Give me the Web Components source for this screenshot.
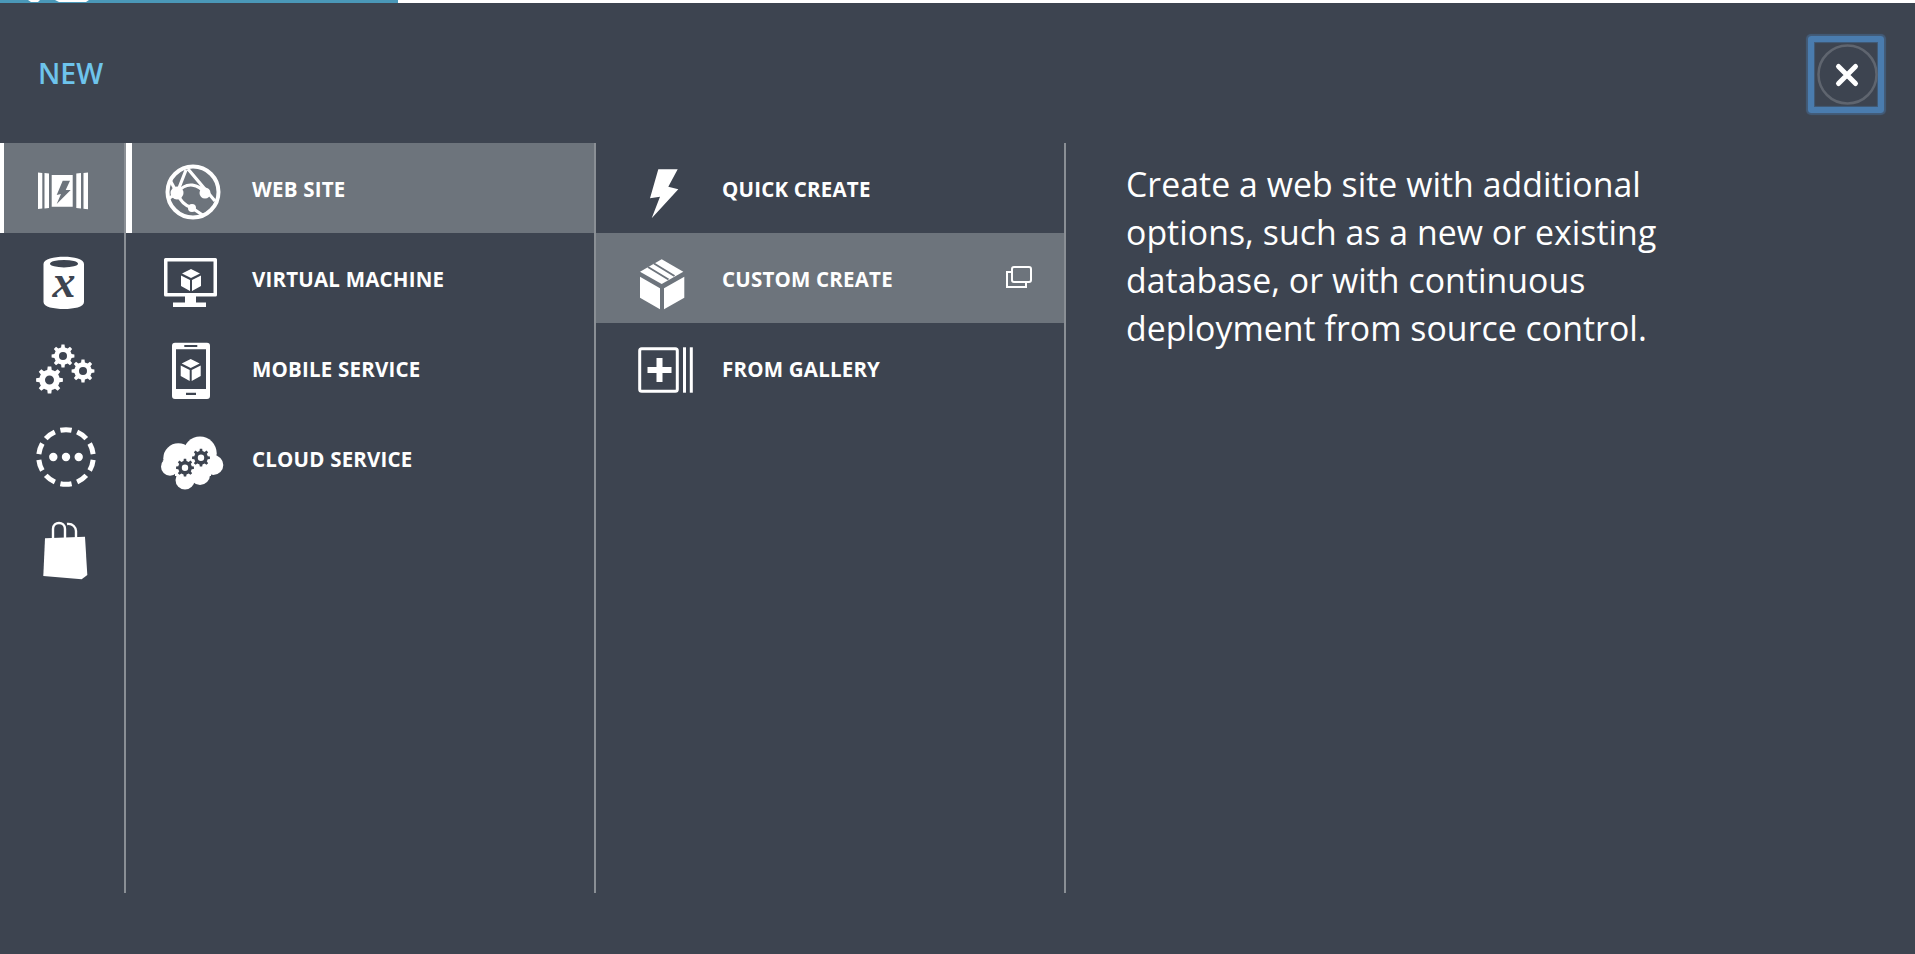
<!DOCTYPE html>
<html>
<head>
<meta charset="utf-8">
<title>New</title>
<style>
  html, body { margin: 0; height: 100%; background: #3d4450; overflow: hidden; }
</style>
</head>
<body>
<new-dialog>
  <span slot="title">NEW</span>
  <menu-rail slot="rail">
    <rail-item icon="websites" selected></rail-item>
    <rail-item icon="database"></rail-item>
    <rail-item icon="gears"></rail-item>
    <rail-item icon="dashed"></rail-item>
    <rail-item icon="bag"></rail-item>
  </menu-rail>
  <menu-column slot="col">
    <menu-item icon="globe" selected mark>WEB SITE</menu-item>
    <menu-item icon="vm">VIRTUAL MACHINE</menu-item>
    <menu-item icon="mobile">MOBILE SERVICE</menu-item>
    <menu-item icon="cloud">CLOUD SERVICE</menu-item>
  </menu-column>
  <menu-column slot="col">
    <menu-item icon="bolt">QUICK CREATE</menu-item>
    <menu-item icon="box" selected dialog>CUSTOM CREATE</menu-item>
    <menu-item icon="gallery">FROM GALLERY</menu-item>
  </menu-column>
  <p slot="desc">Create a web site with additional options, such as a new or existing database, or with continuous deployment from source control.</p>
</new-dialog>

<script>
function gear(cx, cy, r, hole, teeth = 8) {
  let d = "";
  const root = r * 0.76;
  const step = (Math.PI * 2) / teeth;
  for (let i = 0; i < teeth; i++) {
    const a = i * step;
    const pts = [
      [root, a - step * 0.5],
      [root, a - step * 0.28],
      [r, a - step * 0.17],
      [r, a + step * 0.17],
      [root, a + step * 0.28],
    ];
    for (const [rad, t] of pts) {
      d += (d ? "L" : "M") + (cx + rad * Math.cos(t)).toFixed(2) + " " + (cy + rad * Math.sin(t)).toFixed(2);
    }
  }
  d += `Z M${cx - hole} ${cy} a${hole} ${hole} 0 1 0 ${hole * 2} 0 a${hole} ${hole} 0 1 0 ${-hole * 2} 0Z`;
  return d;
}

function cube(cx, cy) {
  return `<path d="M${cx} ${cy - 11}l9 4.5l-9 4.5l-9-4.5Z
    M${cx - 10} ${cy - 4.5}l9 4.5v11l-9-5Z
    M${cx + 10} ${cy - 4.5}l-9 4.5v11l9-5Z"/>`;
}

const ICONS = {
  websites: `
    <path d="M8 16.500l4.300.4v35.600l-4.300.5Z M14.500 17l4.500.4v34.600l-4.500.5Z M46.300 17.400l4.700-.4v35.500l-4.700-.5Z M53.500 16.900l4.500-.4v36.800l-4.500-.5Z"/>
    <path fill-rule="evenodd" d="M21.700 19h21v31.700h-21Z M32.700 24.700l-6 14.300l4.300-1l-4.300 10l14-14h-5l4.300-9.300Z"/>`,
  database: `
    <path fill-rule="evenodd" d="M13.500 18C13.500 13 24 10.700 34 10.700S54 13 54 18V56C54 61 44 63 34 63S13.500 61 13.500 56Z M20 17.700a14 3.700 0 1 0 28 0a14 3.700 0 1 0-28 0Z"/>
    <text x="34" y="51" text-anchor="middle" font-family="'Liberation Serif', serif" font-style="italic" font-weight="700" font-size="46" fill="#3d4450">x</text>`,
  gears: `
    <path fill-rule="evenodd" d="${gear(19.500, 44, 13.500, 4.500)}"/>
    <path fill-rule="evenodd" d="${gear(33, 20, 11.500, 4)}"/>
    <path fill-rule="evenodd" d="${gear(53, 35, 11.500, 4)}"/>`,
  dashed: `
    <circle cx="36" cy="31" r="27.300" fill="none" stroke="#fff" stroke-width="5" pathLength="10" stroke-dasharray=".66 .34" stroke-dashoffset=".33" transform="rotate(-90 36 31)"/>
    <circle cx="23.300" cy="31" r="4.200"/><circle cx="36" cy="31" r="4.200"/><circle cx="48.700" cy="31" r="4.200"/>`,
  bag: `
    <path d="M15 22.300L55 20.700L57.300 59L51.700 63.300L13.300 60Z"/>
    <path fill="none" stroke="#fff" stroke-width="2.400" d="M23 24V13C23 5 35 5 35 13V23 M37 8C43 7 46 12 46 15V22"/>`,
  globe: `
    <g fill="none" stroke="#fff">
      <circle cx="32" cy="36" r="25.500" stroke-width="4"/>
      <path stroke-width="3.200" d="M27 13L54 45 M44 37C38 29 26 24 16 37 M16 37C19 45 25 50 31 52L43 60 M16 37L9 24 M16 37L25 14 M16 37L7 43"/>
    </g>
    <circle cx="44" cy="37" r="5.500"/><circle cx="16" cy="37" r="6.500"/><circle cx="31" cy="52" r="4"/>`,
  vm: `
    <path fill-rule="evenodd" d="M4.500 12H54.500a1.500 1.500 0 0 1 1.500 1.500V49a1.500 1.500 0 0 1-1.500 1.500H35V56.500H45V61H12V56.500H24V50.500H4.500A1.500 1.500 0 0 1 3 49V13.500A1.500 1.500 0 0 1 4.500 12Z M6.500 15.500V47H52.500V15.500Z"/>
    ${cube(30, 34)}`,
  mobile: `
    <path fill-rule="evenodd" d="M14 6.700H46A3 3 0 0 1 49 9.700V60A3 3 0 0 1 46 63H14A3 3 0 0 1 11 60V9.700A3 3 0 0 1 14 6.700Z M23.300 9V11H36.300V9Z M15 13.300V53H45V13.300Z M25 56.700V59H35V56.700Z"/>
    ${cube(29.700, 34)}`,
  cloud: `
    <circle cx="17.300" cy="32.300" r="15"/><circle cx="39" cy="27.300" r="16.700"/>
    <circle cx="52.300" cy="39" r="10"/><circle cx="9" cy="40.700" r="9"/>
    <circle cx="24" cy="54" r="9.500"/><circle cx="39" cy="49" r="10"/>
    <rect x="14" y="30" width="36" height="20"/>
    <path fill="#3d4450" fill-rule="evenodd" d="${gear(40, 31.700, 9, 3.200)}"/>
    <path fill="#3d4450" fill-rule="evenodd" d="${gear(24, 41.700, 9, 3.200)}"/>`,
  bolt: `<path transform="translate(1 0)" d="M26.300 13.300H45.700L36.300 30.700L46.300 33.300L19.700 62.300L28 40.700L18 42.300Z"/>`,
  box: `
    <g transform="translate(1 0)">
      <path d="M29.700 13.300L51.300 25.700L29.700 38L8 25.700Z"/>
      <path fill="none" stroke="#6d747c" stroke-width="2" d="M22 17.500L42.500 30 M16 21L36.500 33.500"/>
      <path d="M8 30.700L28 42.300V63.300L8 51.700Z M32 42.300L52.300 30.700V51.700L32 63.300Z"/>
    </g>`,
  gallery: `
    <g transform="translate(1.500 0)">
      <rect x="7.200" y="12.800" width="37.600" height="42.400" rx="2" fill="none" stroke="#fff" stroke-width="3"/>
      <path d="M24 22H30V31H39V37H30V46H24V37H15V31H24Z"/>
      <rect x="50.500" y="11.300" width="3" height="45.400"/><rect x="57.300" y="11.300" width="3" height="45.400"/>
    </g>`,
};

class AppIcon extends HTMLElement {
  constructor() {
    super();
    this.attachShadow({ mode: "open" });
  }

  connectedCallback() {
    this.shadowRoot.innerHTML = /* html */`
      <style>
        :host { display: block; width: 64px; height: 64px; flex: none; }
        svg { display: block; width: 64px; height: 64px; fill: #fff; overflow: visible; }
      </style>
      <svg viewBox="0 0 64 64" aria-hidden="true">${ICONS[this.getAttribute("name")] || ""}</svg>`;
  }
}

class RailItem extends HTMLElement {
  constructor() {
    super();
    this.attachShadow({ mode: "open" });
  }

  connectedCallback() {
    this.shadowRoot.innerHTML = /* html */`
      <style>
        :host {
          display: flex;
          height: 90px;
          box-sizing: border-box;
          padding: 13px 0 0 30px;
        }
        :host([selected]) {
          background: #6d747c;
          box-shadow: inset 4px 0 #fff;
        }
      </style>
      <app-icon name="${this.getAttribute("icon")}"></app-icon>`;
  }
}

class MenuRail extends HTMLElement {
  constructor() {
    super();
    this.attachShadow({ mode: "open" }).innerHTML = /* html */`
      <style>
        :host {
          display: block;
          width: 124px;
          flex: none;
          border-right: 2px solid #8a8f95;
        }
      </style>
      <slot></slot>`;
  }
}

class MenuColumn extends HTMLElement {
  constructor() {
    super();
    this.attachShadow({ mode: "open" }).innerHTML = /* html */`
      <style>
        :host {
          display: block;
          width: 468px;
          flex: none;
          border-right: 2px solid #8a8f95;
        }
      </style>
      <slot></slot>`;
  }
}

class MenuItem extends HTMLElement {
  constructor() {
    super();
    this.attachShadow({ mode: "open" });
  }

  connectedCallback() {
    const extra = this.hasAttribute("dialog") ? /* html */`
      <svg class="extra" width="28" height="24" viewBox="0 0 28 24" aria-hidden="true">
        <path d="M7 6H2V21H21V16" fill="none" stroke="#fff" stroke-width="2"/>
        <rect x="7" y="1" width="19" height="15" rx="2" fill="#6d747c" stroke="#fff" stroke-width="2"/>
      </svg>` : "";
    this.shadowRoot.innerHTML = /* html */`
      <style>
        :host {
          display: flex;
          align-items: center;
          height: 90px;
          box-sizing: border-box;
          padding-left: 35px;
          gap: 27px;
        }
        :host([selected]) { background: #6d747c; }
        :host([mark]) { box-shadow: inset 6px 0 #fff; }
        app-icon { align-self: flex-start; margin-top: 13px; }
        .label {
          font-family: "Open Sans", sans-serif;
          font-size: 20.5px;
          font-weight: 700;
          letter-spacing: 0.2px;
          padding-top: 1px;
          color: #fff;
        }
        .extra { margin-left: auto; margin-right: 31px; }
      </style>
      <app-icon name="${this.getAttribute("icon")}"></app-icon>
      <span class="label"><slot></slot></span>
      ${extra}`;
  }
}

class NewDialog extends HTMLElement {
  constructor() {
    super();
    this.attachShadow({ mode: "open" }).innerHTML = /* html */`
      <style>
        :host {
          display: block;
          height: 100%;
          color: #fff;
          font-family: "Open Sans", sans-serif;
        }
        .strip { display: flex; height: 3px; background: #fff; }
        .strip div { width: 398px; background: #4a98b8; }
        .strip svg { display: block; }
        header {
          height: 140px;
          box-sizing: border-box;
          display: flex;
          justify-content: space-between;
          align-items: flex-start;
          padding: 33px 31px 0 38px;
        }
        .title {
          font-size: 28.5px;
          font-weight: 600;
          line-height: 40px;
          margin-top: 17px;
          color: #6ec4ec;
        }
        .close {
          width: 64px;
          height: 65px;
          border: 6px solid #4a7cae;
          border-radius: 3px;
          box-shadow: 0 0 1px 2px #4a7cae70, inset 0 0 1px 1px #4a7cae70;
          box-sizing: content-box;
          padding: 0;
          background: none;
        }
        .close svg { display: block; }
        .columns { display: flex; height: 750px; }
        .desc { padding: 17px 0 0 60px; width: 570px; }
        ::slotted(p) {
          margin: 0;
          font-size: 33.8px;
          line-height: 48px;
          letter-spacing: 0.05px;
        }
      </style>
      <div class="strip">
        <div>
          <svg width="100" height="3" viewBox="0 0 100 3" fill="#fff" aria-hidden="true">
            <path d="M28 0H40L38 2H31Z M55 0H89L86 2H59Z"/>
          </svg>
        </div>
      </div>
      <header>
        <div class="title"><slot name="title"></slot></div>
        <button class="close" aria-label="Close">
          <svg width="64" height="65" viewBox="0 0 64 65" aria-hidden="true">
            <circle cx="33.500" cy="32.500" r="29" fill="none" stroke="#5f656f" stroke-width="2.500"/>
            <path d="M24.500 24.500L41.500 41.500M41.500 24.500L24.500 41.500" stroke="#fff" stroke-width="5" stroke-linecap="round"/>
          </svg>
        </button>
      </header>
      <div class="columns">
        <slot name="rail"></slot>
        <slot name="col"></slot>
        <div class="desc"><slot name="desc"></slot></div>
      </div>`;
  }
}

customElements.define("app-icon", AppIcon);
customElements.define("rail-item", RailItem);
customElements.define("menu-rail", MenuRail);
customElements.define("menu-column", MenuColumn);
customElements.define("menu-item", MenuItem);
customElements.define("new-dialog", NewDialog);
</script>
</body>
</html>
